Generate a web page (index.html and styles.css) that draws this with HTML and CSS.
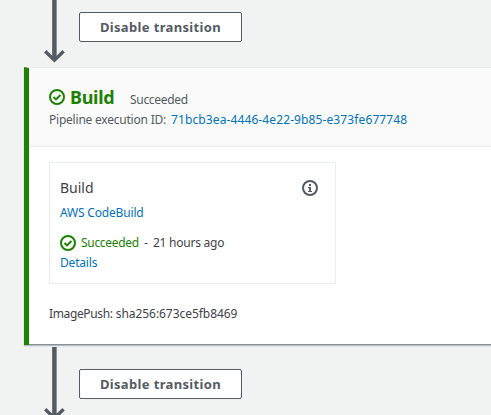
FILE: index.html
```html
<!DOCTYPE html>
<html lang="en">
<head>
<meta charset="utf-8">
<title>Pipeline</title>
<link rel="stylesheet" href="styles.css">
</head>
<body>
<main class="pipeline">
  <div class="transition transition-in">
    <svg class="arrow" width="22" height="64" viewBox="0 0 22 64"><path class="shaft" d="M11.4 0V60"/><path class="head" d="M2.2 51.2L11.4 60.2L20.6 51.2"/></svg>
    <button class="button"><span>Disable transition</span></button>
  </div>
  <section class="stage">
    <header class="stage-header">
      <div class="stage-title">
        <svg class="status" viewBox="0 0 16 16"><circle cx="8" cy="8" r="7"/><path d="M4.5 8L7 10.4L11.4 6"/></svg>
        <h2>Build</h2>
        <span class="stage-status">Succeeded</span>
      </div>
      <div class="execution"><span class="execution-label">Pipeline execution ID:</span><a class="execution-id">71bcb3ea-4446-4e22-9b85-e373fe677748</a></div>
    </header>
    <div class="stage-body">
      <article class="action">
        <div class="action-top">
          <h3>Build</h3>
          <svg class="info" viewBox="0 0 16 16"><circle cx="8" cy="8" r="7"/><path d="M7 4h2v2H7zM6 7h3v4h1v1H6v-1h1V8H6z"/></svg>
        </div>
        <a class="provider">AWS CodeBuild</a>
        <div class="action-status">
          <svg class="status" viewBox="0 0 16 16"><circle cx="8" cy="8" r="7"/><path d="M4.5 8L7 10.4L11.4 6"/></svg>
          <span class="result">Succeeded</span><span class="dash">-</span><span class="time">21 hours ago</span>
        </div>
        <a class="details">Details</a>
      </article>
      <p class="revision"><span class="revision-label">ImagePush:</span> sha256:673ce5fb8469</p>
    </div>
  </section>
  <div class="transition transition-out">
    <svg class="arrow" width="22" height="76" viewBox="0 0 22 76"><path class="shaft" d="M11.4 0V70"/><path class="head" d="M2.2 62.2L11.4 71.2L20.6 62.2"/></svg>
    <button class="button"><span>Disable transition</span></button>
  </div>
</main>
</body>
</html>
```
FILE: styles.css
```css
* { box-sizing: border-box; }
body {
  margin: 0;
  height: 415px;
  overflow: hidden;
  background: #f1f3f3;
  color: #3f4249;
  font: 12px/20px "Noto Sans", "Open Sans", sans-serif;
}
h2, h3, p { margin: 0; }
a { color: #0073bb; }
svg { flex: none; display: block; }
.transition { display: flex; align-items: flex-start; padding-left: 43px; }
.transition-in { height: 67px; }
.transition-out { height: 70px; padding-top: 2px; overflow: hidden; }
.arrow { margin-right: 14px; fill: none; stroke: #545b64; }
.shaft { stroke-width: 4.5; }
.head { stroke-width: 3.4; }
.button {
  width: 163px;
  height: 30px;
  margin: 12px 0 0;
  padding: 0;
  border: 1px solid #545b64;
  border-radius: 2px;
  background: #fff;
  color: #545b64;
  font: bold 13px/28px "Noto Sans", "Open Sans", sans-serif;
  letter-spacing: .35px;
  white-space: nowrap;
}
.transition-out .button { margin-top: 22px; }
.stage {
  height: 278px;
  margin-left: 24px;
  border-left: 5px solid #1d8102;
  border-top: 1px solid #eaeded;
  background: #fff;
  box-shadow: 0 -1px 0 #879196 inset, 0 1px 1px rgba(0, 28, 36, .25);
}
.stage-header { height: 79px; padding: 19px 0 0 20px; background: #fafafa; border-bottom: 1px solid #eaeded; }
.stage-title { display: flex; align-items: baseline; height: 23px; }
.status { width: 16px; height: 16px; fill: none; stroke: #1d8102; stroke-width: 2; }
.stage-title .status { align-self: flex-start; margin: 2px 5px 0 0; }
h2 { width: 60px; color: #1d8102; font-size: 18px; line-height: 20px; letter-spacing: -.3px; }
.stage-status, .execution-label { color: #545b64; }
.stage-status { letter-spacing: -.3px; }
.execution { display: flex; white-space: nowrap; }
.execution-label { width: 122px; letter-spacing: -.22px; }
.execution-id { letter-spacing: .11px; }
.stage-body { padding: 15px 0 0 20px; }
.action { width: 287px; height: 122px; padding: 15px 10px 0; border: 1px solid #eaeded; }
.action-top { display: flex; justify-content: space-between; height: 25px; padding-right: 7px; }
h3 { font-size: 14px; font-weight: 400; line-height: 20px; }
.info { width: 16px; height: 16px; margin-top: 2px; fill: none; stroke: #545b64; stroke-width: 2; }
.info path { fill: #545b64; stroke: none; }
.provider, .details { display: block; letter-spacing: -.18px; }
.action-status { display: flex; height: 20px; margin-top: 10px; white-space: nowrap; }
.action-status .status { margin: 2px 5px 0 0; }
.result { width: 63px; color: #1d8102; letter-spacing: -.3px; }
.dash { width: 9px; }
.time { letter-spacing: -.25px; }
.revision { margin-top: 20px; letter-spacing: -.05px; }
.revision-label { letter-spacing: -.36px; }
```
